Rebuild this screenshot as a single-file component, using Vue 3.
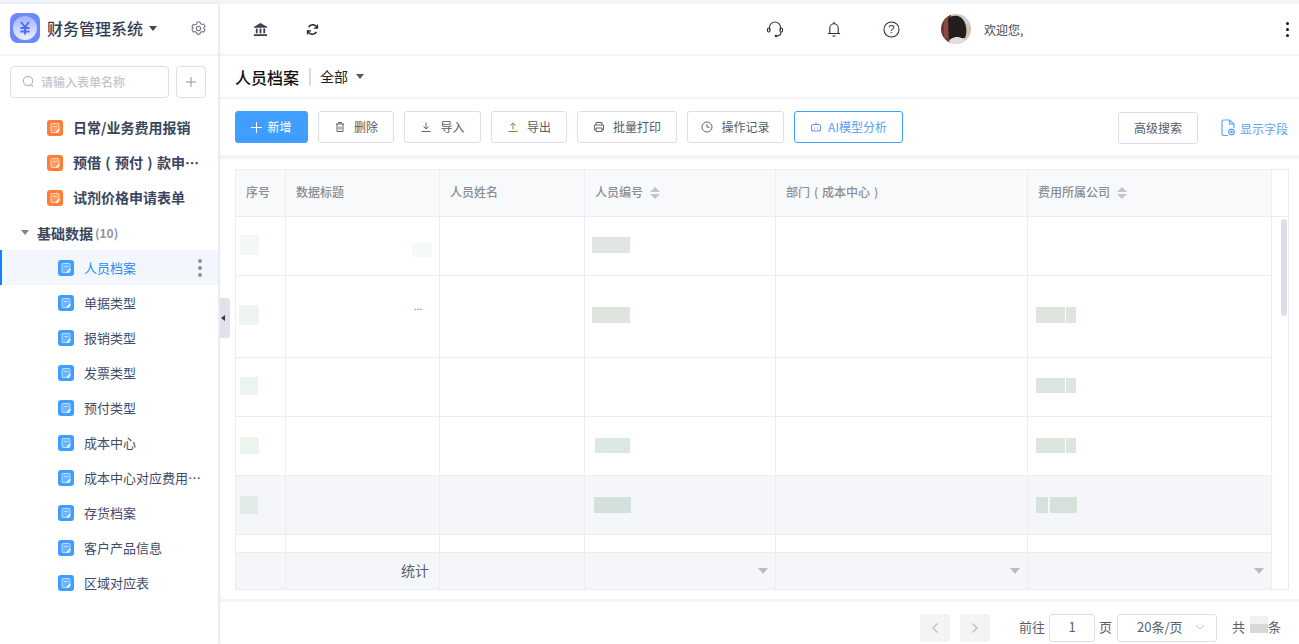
<script setup>
const orangeForms = ['日常/业务费用报销', '预借(预付)款申请单据表', '试剂价格申请表单']
const blueForms = ['人员档案', '单据类型', '报销类型', '发票类型', '预付类型', '成本中心', '成本中心对应费用类型', '存货档案', '客户产品信息', '区域对应表']

const segs = (text) => text.split(/([()])/).filter(Boolean).map((t) => ({
  t,
  cls: t === '(' || t === ')' ? 'paren' : ''
}))

const tools = [
  { label: '删除', width: 76, icon: 'trash' },
  { label: '导入', width: 77, icon: 'down' },
  { label: '导出', width: 76, icon: 'up' },
  { label: '批量打印', width: 100, icon: 'print' },
  { label: '操作记录', width: 97, icon: 'clock' }
]

const headers = [
  { label: '序号' },
  { label: '数据标题' },
  { label: '人员姓名' },
  { label: '人员编号', sort: true },
  { label: '部门(成本中心)' },
  { label: '费用所属公司', sort: true },
  { label: '' }
]

const m = (ml, w, h, bg, mt = 0) => ({ ml, w, h, bg, mt })
const rows = [
  { h: 59, cells: { 0: [m(4, 19, 20, '#f4f8f5', -2)], 1: [m(126, 20, 14, '#f6faf7', 8)], 3: [m(7, 38, 16, '#e1e5e1', -2)] } },
  { h: 82, dots: true, cells: { 0: [m(3, 20, 20, '#eef4f0', -3)], 3: [m(7, 38, 16, '#dfe4df', -3)], 5: [m(8, 29, 16, '#dde5df', -3), m(1, 10, 16, '#dde5df', -3)] } },
  { h: 59, cells: { 0: [m(4, 18, 18, '#ecf4ef', -2)], 5: [m(8, 29, 15, '#dde5df', -3), m(1, 10, 15, '#dde5df', -3)] } },
  { h: 59, cells: { 0: [m(4, 19, 17, '#ebf4ed', -1)], 3: [m(10, 35, 15, '#dde7e1', -1)], 5: [m(8, 29, 15, '#dde5df', -1), m(1, 10, 15, '#dde5df', -1)] } },
  { h: 59, hover: true, cells: { 0: [m(4, 18, 18, '#e2ece7')], 3: [m(9, 37, 16, '#d4e0db')], 5: [m(8, 12, 16, '#d6e1dc'), m(2, 27, 16, '#d6e1dc')] } },
  { h: 18, cells: {} }
]
const maskStyle = (x) => ({
  marginLeft: x.ml + 'px',
  marginTop: x.mt + 'px',
  width: x.w + 'px',
  height: x.h + 'px',
  background: x.bg
})
</script>

<template>
  <div class="app">
    <aside class="sidebar">
      <div class="brand">
        <svg class="logo" viewBox="0 0 30 30" width="30" height="30">
          <defs>
            <linearGradient id="lg" x1="0" y1="0" x2="0" y2="1">
              <stop offset="0" stop-color="#9fb2ff" />
              <stop offset="1" stop-color="#eef1ff" />
            </linearGradient>
          </defs>
          <rect width="30" height="30" rx="8" fill="#6d88fb" />
          <circle cx="15" cy="15" r="12" fill="url(#lg)" />
          <path d="M11 9l4 5 4-5M10.500 15h9M10.500 18.500h9M15 14v7.500" fill="none" stroke="#4f6cf0" stroke-width="2" />
        </svg>
        <span class="brand-name">财务管理系统</span>
        <i class="caret brand-caret"></i>
        <svg class="gear" viewBox="0 0 16 16" width="15" height="15" fill="none" stroke="#6f7480" stroke-width="1.100">
          <path d="M6.500 1.500h3l.6 1.800 1.700.9 1.800-.5 1.400 2.500-1.300 1.300v1l1.300 1.300-1.400 2.500-1.800-.5-1.700.9-.6 1.800h-3l-.6-1.800-1.700-.9-1.800.5L1 9.300 2.300 8 1 6.700l1.400-2.500 1.800.5 1.700-.9z" transform="translate(0 -.5)" />
          <circle cx="8" cy="8" r="2.300" />
        </svg>
      </div>

      <div class="search-row">
        <div class="search">
          <svg viewBox="0 0 14 14" width="13" height="13" fill="none" stroke="#b4b8c2" stroke-width="1.200"><circle cx="6.500" cy="6.500" r="5" /><path d="M10 10.500l2 2" /></svg>
          <span class="search-text">请输入表单名称</span>
        </div>
        <button class="add" type="button">
          <svg viewBox="0 0 12 12" width="12" height="12" stroke="#8f939e" stroke-width="1"><path d="M6 1v10M1 6h10" /></svg>
        </button>
      </div>

      <ul class="menu">
        <li v-for="name in orangeForms" :key="name" class="item item-strong">
          <svg class="form-ico" viewBox="0 0 16 16" width="16" height="16">
            <rect width="16" height="16" rx="3" fill="#ff7d37" />
            <rect x="4" y="3.500" width="8" height="9" rx="1" fill="#ff9a63" stroke="#ffd4bc" stroke-width="1" />
            <path d="M6 6.500h4" stroke="#ffd4bc" stroke-width="1" />
            <path d="M8.800 11.800l3-3 1 1-3 3h-1z" fill="#fff" />
          </svg>
          <span class="ell"><span v-for="(s, si) in segs(name)" :key="si" :class="s.cls">{{ s.t }}</span></span>
        </li>
        <li class="group">
          <i class="caret group-caret"></i>
          <span class="group-name">基础数据</span>
          <span class="group-count">(10)</span>
        </li>
        <li v-for="(name, i) in blueForms" :key="name" class="item item-sub" :class="{ active: i === 0 }">
          <svg class="form-ico" viewBox="0 0 16 16" width="16" height="16">
            <rect width="16" height="16" rx="3" fill="#409eff" />
            <rect x="4" y="3.500" width="8" height="9" rx="1" fill="#6cb4ff" stroke="#b8dcff" stroke-width="1" />
            <path d="M6 6.500h4" stroke="#b8dcff" stroke-width="1" />
            <path d="M8.800 11.800l3-3 1 1-3 3h-1z" fill="#fff" />
          </svg>
          <span class="ell">{{ name }}</span>
          <span v-if="i === 0" class="more"><i></i><i></i><i></i></span>
        </li>
      </ul>
      <div class="collapse"><i></i></div>
    </aside>

    <main class="main">
      <header class="topbar">
        <svg class="t-bank" viewBox="0 0 16 16" width="15" height="15" fill="#3d4150">
          <path d="M8 1l7 4v1.200H1V5z" />
          <rect x="3" y="7" width="2" height="5" /><rect x="7" y="7" width="2" height="5" /><rect x="11" y="7" width="2" height="5" />
          <rect x="1" y="13" width="14" height="2" />
        </svg>
        <svg class="t-refresh" viewBox="0 0 14 14" width="13" height="13" fill="none" stroke="#22252e" stroke-width="1.700">
          <path d="M12 5.500A5 5 0 0 0 2.800 4.500" /><path d="M2 8.500A5 5 0 0 0 11.200 9.500" />
          <path d="M12.500 1.500v4h-4" stroke-width="1.200" /><path d="M1.500 12.500v-4h4" stroke-width="1.200" />
        </svg>
        <svg class="t-head" viewBox="0 0 18 18" width="18" height="18" fill="none" stroke="#2d3038" stroke-width="1.100">
          <path d="M3.500 10V7.500a5.500 5.500 0 0 1 11 0V10" />
          <rect x="1.500" y="8" width="2.500" height="4" rx="1.200" /><rect x="14" y="8" width="2.500" height="4" rx="1.200" />
          <path d="M15 12c0 2.500-2 4-4.500 4" /><circle cx="10" cy="16" r=".8" fill="#2d3038" />
        </svg>
        <svg class="t-bell" viewBox="0 0 14 16" width="14" height="16" fill="none" stroke="#2d3038" stroke-width="1.100">
          <path d="M7 .8v1.500M2.800 12V7a4.200 4.200 0 0 1 8.400 0v5M1 12.500h12" /><path d="M5.500 15h3" />
        </svg>
        <svg class="t-help" viewBox="0 0 18 18" width="17" height="17">
          <circle cx="9" cy="9" r="8" fill="none" stroke="#2d3038" stroke-width="1.100" />
          <text x="9" y="13.200" text-anchor="middle" font-size="12" fill="#2d3038" font-family="Liberation Sans">?</text>
        </svg>
        <svg class="t-avatar" viewBox="0 0 30 30" width="30" height="30">
          <defs><clipPath id="av"><circle cx="15" cy="15" r="15" /></clipPath></defs>
          <g clip-path="url(#av)">
            <rect width="30" height="30" fill="#d4c6ae" />
            <rect x="21" y="0" width="9" height="10" fill="#c9d3d8" />
            <rect x="0" y="0" width="10" height="30" fill="#6e3a34" />
            <path d="M7 5c4-5 13-4 16 2 3 5 3 13 1 17l-16 1z" fill="#241d1e" />
            <path d="M7 30c1-5 5-7 9-7s8 2 9 7z" fill="#e6dbe0" />
            <path d="M3 4h4v20H3z" fill="#8a4a40" />
          </g>
        </svg>
        <span class="welcome">欢迎您,</span>
        <span class="kebab"><i></i><i></i><i></i></span>
      </header>

      <section class="titlebar">
        <h1>人员档案</h1>
        <span class="sep"></span>
        <span class="scope">全部</span>
        <i class="caret scope-caret"></i>
      </section>

      <section class="toolbar">
        <button class="btn btn-primary" type="button">
          <svg viewBox="0 0 11 11" width="11" height="11" stroke="#fff" stroke-width="1"><path d="M5.500 0v11M0 5.500h11" /></svg>
          <span class="btn-text">新增</span>
        </button>
        <button v-for="t in tools" :key="t.label" class="btn" type="button" :style="{ width: t.width + 'px' }">
          <svg viewBox="0 0 12 12" width="12" height="12" fill="none" stroke="#5f6470" stroke-width="1">
            <template v-if="t.icon === 'trash'">
              <path d="M2 3h8M4.500 3V1.500h3V3M3 3v7.500h6V3M5 5.500v3M7 5.500v3" />
            </template>
            <template v-else-if="t.icon === 'down'">
              <path d="M6 1.500v6M3.500 5.500L6 8l2.500-2.500M1.500 10.500h9" />
            </template>
            <template v-else-if="t.icon === 'up'">
              <path d="M6 8.500v-6M3.500 4.500L6 2l2.500 2.500M1.500 10.500h9" stroke="#a9703f" />
            </template>
            <template v-else-if="t.icon === 'print'">
              <path d="M3 4V1.500h6V4M3 9H1.500V4h9v5H9M3 7h6v3.500H3z" />
            </template>
            <template v-else>
              <circle cx="6" cy="6" r="5" /><path d="M6 3v3.200h2.500" />
            </template>
          </svg>
          <span class="btn-text">{{ t.label }}</span>
        </button>
        <button class="btn btn-ai" type="button">
          <svg viewBox="0 0 12 12" width="12" height="12" fill="none" stroke="#5d9cf5" stroke-width="1.100">
            <rect x="1.500" y="3.500" width="9" height="6.500" rx="2" /><path d="M6 1.500v2M4.500 6.500v1M7.500 6.500v1" />
          </svg>
          <span class="btn-text">AI模型分析</span>
        </button>
        <button class="btn btn-search" type="button"><span class="btn-text">高级搜索</span></button>
        <a class="fields">
          <svg viewBox="0 0 14 18" width="14" height="18" fill="none" stroke="#5aa5f7" stroke-width="1.200">
            <path d="M7 16.500H2.500a1.500 1.500 0 0 1-1.500-1.500V2.500A1.500 1.500 0 0 1 2.500 1h6L13 5v4" />
            <path d="M8.500 1v4H13" />
            <circle cx="10.500" cy="13" r="2.800" /><circle cx="10.500" cy="13" r=".8" fill="#5aa5f7" />
          </svg>
          显示字段
        </a>
      </section>

      <section class="card">
        <div class="table">
          <div class="tr thead">
            <div v-for="(h, i) in headers" :key="i" class="td th" :class="{ blank: i === 6 }">
              <span class="th-text"><span v-for="(s, si) in segs(h.label)" :key="si" :class="s.cls">{{ s.t }}</span></span>
              <span v-if="h.sort" class="sort"><i class="up"></i><i class="dn"></i></span>
            </div>
          </div>
          <div v-for="(r, ri) in rows" :key="ri" class="tr" :class="{ hover: r.hover }" :style="{ height: r.h + 'px' }">
            <div v-for="c in 7" :key="c" class="td" :class="{ blank: c === 7 }">
              <span v-for="(x, xi) in r.cells[c - 1] || []" :key="xi" class="mask" :style="maskStyle(x)"></span>
              <span v-if="r.dots && c === 2" class="trunc">...</span>
            </div>
          </div>
          <div class="tr tfoot">
            <div class="td"></div>
            <div class="td sum">统计</div>
            <div class="td"></div>
            <div class="td tf"><i class="caret tf-caret"></i></div>
            <div class="td tf"><i class="caret tf-caret"></i></div>
            <div class="td tf"><i class="caret tf-caret"></i></div>
            <div class="td blank"></div>
          </div>
          <div class="scrollbar"></div>
        </div>
      </section>

      <footer class="pager">
        <button class="page-btn" type="button">
          <svg viewBox="0 0 8 12" width="8" height="12" fill="none" stroke="#c0c4cc" stroke-width="1.500"><path d="M6.500 1.500L2 6l4.500 4.500" /></svg>
        </button>
        <button class="page-btn" type="button">
          <svg viewBox="0 0 8 12" width="8" height="12" fill="none" stroke="#c0c4cc" stroke-width="1.500"><path d="M1.500 1.500L6 6l-4.500 4.500" /></svg>
        </button>
        <span class="goto">前往</span>
        <span class="page-input">1</span>
        <span class="page-unit">页</span>
        <span class="page-size">
          <span>20条/页</span>
          <svg viewBox="0 0 10 6" width="10" height="6" fill="none" stroke="#c0c4cc" stroke-width="1"><path d="M1 1l4 4 4-4" /></svg>
        </span>
        <span class="total">共</span>
        <span class="total-mask"></span>
        <span class="total-end">条</span>
      </footer>
    </main>
  </div>
</template>

<style>
html, body { margin: 0; padding: 0; background: #f3f4f8; overflow: hidden; }
</style>

<style scoped>
.app {
  display: flex;
  box-sizing: border-box;
  width: 1299px;
  height: 644px;
  padding-top: 4px;
  overflow: hidden;
  background: #f3f4f8;
  font-family: "Noto Sans CJK SC", "Noto Sans", sans-serif;
  color: #3a4560;
}
i { display: block; }
ul { list-style: none; margin: 0; padding: 0; }
button { font-family: inherit; margin: 0; cursor: pointer; }
.paren { display: inline-block; width: 1em; text-align: center; }

.caret {
  width: 0;
  height: 0;
  border-left: 4.5px solid transparent;
  border-right: 4.5px solid transparent;
  border-top: 5px solid #3a4560;
}

/* sidebar */
.sidebar {
  position: relative;
  z-index: 1;
  flex: 0 0 218px;
  width: 218px;
  min-width: 0;
  margin-right: 2px;
  background: #fff;
  box-shadow: 1px 0 4px rgba(40, 50, 80, 0.08);
}
.brand {
  display: flex;
  align-items: center;
  box-sizing: border-box;
  height: 52px;
  padding: 0 12px 2px 10px;
  border-bottom: 2px solid #f3f4f8;
}
.logo { flex: none; }
.brand-name { margin-left: 7px; font-size: 16px; font-weight: 500; color: #333d55; line-height: 24px; }
.brand-caret { margin-left: 6px; }
.gear { margin-left: auto; }
.search-row { display: flex; gap: 7px; padding: 10px 12px 12px 10px; }
.search {
  display: flex;
  align-items: center;
  gap: 6px;
  box-sizing: border-box;
  width: 159px;
  height: 32px;
  padding-left: 11px;
  padding-bottom: 2px;
  border: 1px solid #dcdfe6;
  border-radius: 4px;
  font-size: 12px;
  font-weight: 500;
  color: #c0c4cc;
}
.add {
  display: flex;
  align-items: center;
  justify-content: center;
  box-sizing: border-box;
  width: 30px;
  height: 32px;
  padding: 0;
  background: #fff;
  border: 1px solid #dcdfe6;
  border-radius: 4px;
}
.item, .group { display: flex; align-items: center; height: 35px; box-sizing: border-box; }
.item-strong { padding: 0 16px 0 47px; font-size: 14px; font-weight: 700; color: #3a4560; }
.item-sub { padding: 0 16px 0 58px; font-size: 13px; color: #3f4b6b; }
.form-ico { flex: none; }
.ell { overflow: hidden; white-space: nowrap; text-overflow: ellipsis; min-width: 0; padding-bottom: 1px; }
.item-strong .ell { margin-left: 10px; }
.item-sub .ell { margin-left: 10px; }
.active { position: relative; background: #f3f7fd; color: #2d8cf0; box-shadow: inset 2px 0 0 #1a7fff; }
.more { display: flex; flex-direction: column; gap: 3px; margin-left: auto; margin-right: 0; }
.more i { width: 4px; height: 4px; border-radius: 50%; background: #8a90a3; }
.group { padding-left: 21px; font-size: 14px; font-weight: 700; }
.group-caret { border-top-color: #7d8397; }
.group-name { margin-left: 8px; color: #3a4560; }
.group-count { margin-left: 2px; font-size: 12px; color: #8e94a6; }
.collapse {
  position: absolute;
  left: 220px;
  top: 294px;
  display: flex;
  align-items: center;
  width: 10px;
  height: 40px;
  padding-left: 1px;
  box-sizing: border-box;
  border-radius: 0 3px 3px 0;
  background: #dfe2ea;
}
.collapse i {
  border-top: 3px solid transparent;
  border-bottom: 3px solid transparent;
  border-right: 4px solid #2f3647;
}

/* main */
.main { flex: 1; min-width: 0; display: flex; flex-direction: column; }
.topbar {
  display: flex;
  align-items: center;
  box-sizing: border-box;
  height: 50px;
  padding: 0 10px 0 33px;
  background: #fff;
}
.t-refresh { margin-left: 38px; }
.t-head { margin-left: 447px; }
.t-bell { margin-left: 43px; }
.t-help { margin-left: 42px; }
.t-avatar { margin-left: 41px; flex: none; }
.welcome { margin-left: 13px; font-size: 12px; color: #444; }
.kebab { display: flex; flex-direction: column; gap: 3px; margin-left: auto; }
.kebab i { width: 3px; height: 3px; border-radius: 50%; background: #111; }

.titlebar {
  display: flex;
  align-items: center;
  box-sizing: border-box;
  height: 41px;
  margin-top: 2px;
  padding-left: 15px;
  background: #fff;
}
.titlebar h1 { margin: 0; font-size: 16px; font-weight: 500; color: #111; line-height: 24px; }
.sep { width: 2px; height: 18px; margin: 0 9px 0 10px; background: #d8dbe3; }
.scope { font-size: 14px; color: #222; padding-bottom: 1px; }
.scope-caret { margin-left: 8px; border-top-color: #55585f; }

.toolbar {
  display: flex;
  align-items: flex-start;
  gap: 10px;
  box-sizing: border-box;
  height: 56px;
  margin-top: 2px;
  padding: 12px 10px 0 15px;
  background: #fff;
}
.btn {
  display: flex;
  flex: none;
  align-items: center;
  justify-content: center;
  gap: 8px;
  box-sizing: border-box;
  height: 32px;
  padding: 0;
  background: #fff;
  border: 1px solid #dcdfe6;
  border-radius: 3px;
  font-size: 12px;
  color: #565b66;
  white-space: nowrap;
}
.btn-text { padding-bottom: 2px; }
.btn-primary { width: 73px; gap: 5px; background: #409eff; border-color: #409eff; color: #fff; }
.btn-ai { width: 109px; gap: 6px; border-color: #409eff; color: #5d9cf5; }
.btn-search { width: 80px; margin-left: 205px; margin-top: 1px; }
.fields {
  display: flex;
  flex: none;
  align-items: center;
  gap: 5px;
  margin-left: 13px;
  height: 34px;
  font-size: 12px;
  color: #5aa5f7;
  white-space: nowrap;
}

.card {
  box-sizing: border-box;
  height: 440px;
  margin-top: 4px;
  padding: 10px 10px 10px 15px;
  background: #fff;
}
.table {
  position: relative;
  width: 1054px;
  box-sizing: border-box;
  border: 1px solid #ebedf3;
}
.tr {
  display: grid;
  grid-template-columns: 50px 154px 145px 191px 252px 244px 16px;
  height: 59px;
}
.td {
  display: flex;
  align-items: center;
  box-sizing: border-box;
  position: relative;
  border-right: 1px solid #ebedf3;
  border-bottom: 1px solid #ebedf3;
  min-width: 0;
}
.td.blank { border: 0; background: #fff; }
.thead { height: 47px; }
.th {
  padding-left: 10px;
  background: #f8f9fb;
  font-size: 12px;
  font-weight: 500;
  color: #8a8d94;
  white-space: nowrap;
}
.th-text { padding-bottom: 3px; }
.thead .td.blank { border-bottom: 1px solid #ebedf3; background: #fff; }
.sort { display: flex; flex-direction: column; gap: 2px; margin-left: 7px; }
.sort .up { width: 0; height: 0; border: 5px solid transparent; border-top: 0; border-bottom: 5px solid #c0c4cc; }
.sort .dn { width: 0; height: 0; border: 5px solid transparent; border-bottom: 0; border-top: 5px solid #c0c4cc; }
.hover .td:not(.blank) { background: #f5f6fa; }
.mask { display: block; flex: none; }
.trunc {
  position: absolute;
  left: 128px;
  top: 24px;
  font-size: 10px;
  line-height: 12px;
  color: #666;
}
.tfoot { height: 36px; }
.tfoot .td { border-bottom: 0; background: #f5f6fa; }
.tfoot .td.blank { background: #fff; }
.sum { justify-content: flex-end; padding: 0 10px 2px 0; font-size: 14px; color: #5a5e69; }
.tf { justify-content: flex-end; padding-right: 7px; }
.tf-caret { border-left-width: 5px; border-right-width: 5px; border-top: 6px solid #b9bcc4; }
.scrollbar {
  position: absolute;
  right: 1px;
  top: 49px;
  width: 6px;
  height: 97px;
  border-radius: 3px;
  background: #dcdfe8;
}

.pager {
  display: flex;
  align-items: flex-start;
  box-sizing: border-box;
  height: 42px;
  margin-top: 3px;
  padding: 12px 0 0 700px;
  background: #fff;
  font-size: 13px;
  line-height: 26px;
  color: #5a5e69;
  white-space: nowrap;
}
.page-btn {
  display: flex;
  flex: none;
  align-items: center;
  justify-content: center;
  width: 30px;
  height: 28px;
  padding: 0;
  margin-right: 10px;
  background: #f4f4f5;
  border: 0;
  border-radius: 2px;
}
.goto { margin-left: 19px; }
.page-input {
  flex: none;
  box-sizing: border-box;
  width: 46px;
  height: 28px;
  margin-left: 4px;
  border: 1px solid #dcdfe6;
  border-radius: 3px;
  text-align: center;
  line-height: 24px;
}
.page-unit { margin-left: 4px; }
.page-size {
  display: flex;
  flex: none;
  align-items: center;
  justify-content: space-between;
  box-sizing: border-box;
  width: 100px;
  height: 28px;
  margin-left: 5px;
  padding: 0 11px 2px 19px;
  border: 1px solid #dcdfe6;
  border-radius: 3px;
}
.total { margin-left: 15px; }
.total-mask {
  flex: none;
  width: 18px;
  height: 17px;
  margin: 2px 0 0 5px;
  background: linear-gradient(to bottom, #f1f1f1 50%, #d8d8d8 50%);
}
</style>
